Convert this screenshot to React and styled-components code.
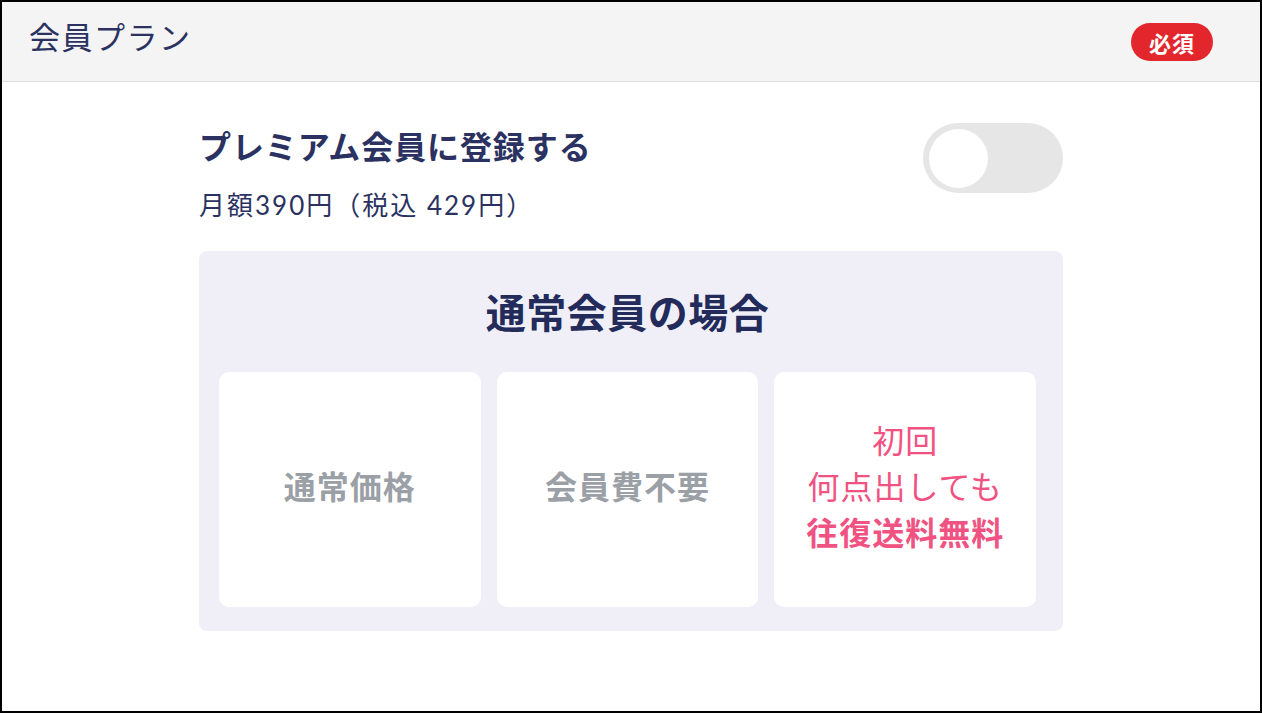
import React from "react";
import styled, { createGlobalStyle } from "styled-components";

const GlobalStyle = createGlobalStyle`
  html, body {
    margin: 0;
    padding: 0;
    background: #ffffff;
  }
  body {
    font-family: "Lato", "Noto Sans CJK JP", "Noto Sans", sans-serif;
  }
`;

const Frame = styled.div`
  width: 1262px;
  height: 713px;
  box-sizing: border-box;
  border: 2px solid #000;
  background: #fff;
  display: flex;
  flex-direction: column;
`;

const Header = styled.header`
  height: 80px;
  box-sizing: border-box;
  background: #f4f4f4;
  border-bottom: 1px solid #dcdcdc;
  display: flex;
  align-items: center;
  justify-content: space-between;
  padding: 0 47px 0 27px;
`;

const HeaderTitle = styled.h1`
  margin: 0 0 13px;
  font-size: 31px;
  font-weight: 400;
  color: #2b3262;
  letter-spacing: 1.5px;
`;

const Badge = styled.span`
  display: inline-flex;
  align-items: center;
  justify-content: center;
  width: 82px;
  height: 38px;
  border-radius: 19px;
  background: #e3262b;
  color: #fff;
  font-size: 22px;
  font-weight: 700;
  letter-spacing: 1px;
`;

const Main = styled.main`
  width: 864px;
  margin: 0 auto;
  padding-top: 43px;
`;

const PlanRow = styled.div`
  display: flex;
  justify-content: space-between;
  align-items: flex-start;
`;

const PlanText = styled.div`
  display: flex;
  flex-direction: column;
`;

const PlanTitle = styled.h2`
  margin: 0;
  font-size: 32px;
  line-height: 44px;
  font-weight: 700;
  letter-spacing: 0.9px;
  color: #2b3262;
`;

const PlanPrice = styled.p`
  margin: 18px 0 0;
  font-size: 26px;
  line-height: 36px;
  letter-spacing: 2px;
  color: #2b3262;
`;

const Toggle = styled.button`
  margin-top: -2px;
  width: 140px;
  height: 70px;
  border: none;
  border-radius: 35px;
  background: #e6e6e6;
  padding: 5px 6px;
  display: flex;
  align-items: center;
  cursor: pointer;
  justify-content: ${(p) => (p.on ? "flex-end" : "flex-start")};
`;

const Knob = styled.span`
  width: 59px;
  height: 59px;
  border-radius: 50%;
  background: #fff;
`;

const InfoBox = styled.section`
  margin-top: 28px;
  background: #f0eff8;
  border-radius: 8px;
  padding: 34px 27px 24px 20px;
`;

const InfoHeading = styled.h3`
  margin: 0;
  text-align: center;
  font-size: 40px;
  line-height: 56px;
  font-weight: 700;
  letter-spacing: 0.5px;
  color: #232b5a;
`;

const Cards = styled.div`
  margin-top: 31px;
  display: grid;
  grid-template-columns: repeat(3, 1fr);
  gap: 16px;
`;

const Card = styled.div`
  height: 235px;
  box-sizing: border-box;
  padding-bottom: 5px;
  background: #fff;
  border-radius: 10px;
  display: flex;
  flex-direction: column;
  align-items: center;
  justify-content: center;
  text-align: center;
`;

const CardLine = styled.span`
  font-size: 32px;
  line-height: 46px;
  letter-spacing: 1px;
  font-weight: ${(p) => (p.bold ? 700 : 400)};
  color: ${(p) => (p.pink ? "#f05282" : "#9b9fa6")};
`;

export default function App() {
  return (
    <>
      <GlobalStyle />
      <Frame>
        <Header>
          <HeaderTitle>会員プラン</HeaderTitle>
          <Badge>必須</Badge>
        </Header>
        <Main>
          <PlanRow>
            <PlanText>
              <PlanTitle>プレミアム会員に登録する</PlanTitle>
              <PlanPrice>月額390円（税込 429円）</PlanPrice>
            </PlanText>
            <Toggle aria-label="プレミアム会員に登録する">
              <Knob />
            </Toggle>
          </PlanRow>
          <InfoBox>
            <InfoHeading>通常会員の場合</InfoHeading>
            <Cards>
              <Card>
                <CardLine bold>通常価格</CardLine>
              </Card>
              <Card>
                <CardLine bold>会員費不要</CardLine>
              </Card>
              <Card>
                <CardLine pink>初回</CardLine>
                <CardLine pink>何点出しても</CardLine>
                <CardLine pink bold>往復送料無料</CardLine>
              </Card>
            </Cards>
          </InfoBox>
        </Main>
      </Frame>
    </>
  );
}
